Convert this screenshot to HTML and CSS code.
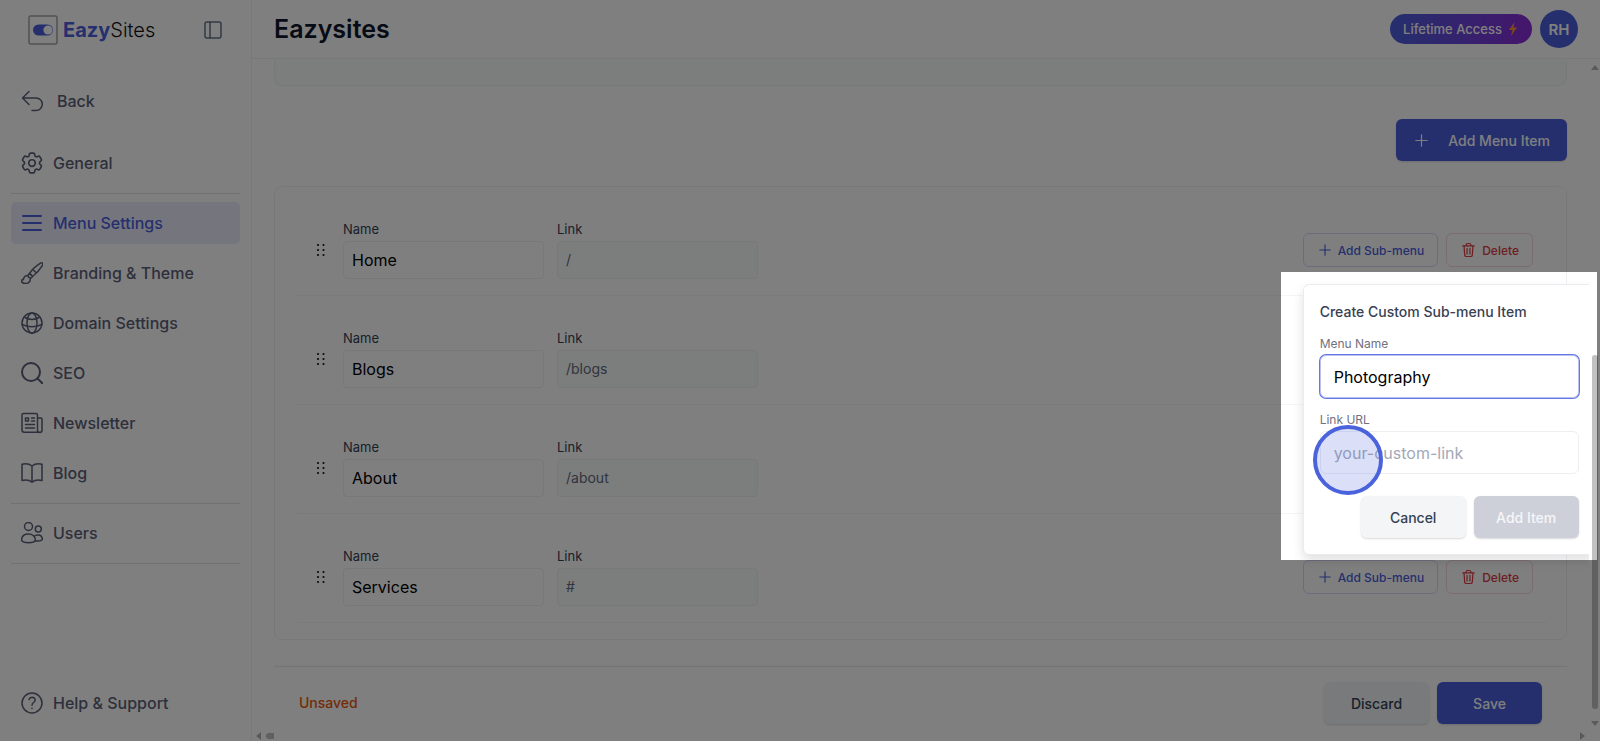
FILE: index.html
```html
<!DOCTYPE html>
<html lang="en">
<head>
  <meta charset="UTF-8">
  <meta name="viewport" content="width=device-width, initial-scale=1.0">
  <title>Eazysites - Menu Settings</title>
  <link rel="stylesheet" href="styles.css">
</head>
<body>
  <!-- shared icons -->
  <svg class="sprite" aria-hidden="true">
    <symbol id="i-plus" viewBox="0 0 16 16"><path d="M8 1v14M1 8h14"/></symbol>
    <symbol id="i-trash" viewBox="0 0 16 18"><path d="M1 4h14M5 4V3q0-2 2-2h2q2 0 2 2v1M2.500 4l.8 11q.1 2 2 2h5.400q1.900 0 2-2l.8-11M6.200 7v7M9.800 7v7"/></symbol>
    <symbol id="i-grip" viewBox="0 0 10 14"><path d="M2 2h.01M7.500 2h.01M2 7h.01M7.500 7h.01M2 12h.01M7.500 12h.01"/></symbol>
  </svg>

  <div class="app">
    <aside class="sidebar">
      <div class="brand">
        <a class="logo" href="#">
          <svg class="logo-mark" viewBox="0 0 30 30">
            <rect class="logo-frame" x="1" y="1" width="28" height="28" rx="1"/>
            <rect class="logo-pill" x="5" y="9.500" width="20" height="11" rx="5.500"/>
            <circle class="logo-knob" cx="20" cy="15" r="4.600"/>
          </svg>
          <span><b>Eazy</b>Sites</span>
        </a>
        <button class="collapse-btn" aria-label="Collapse sidebar">
          <svg class="icon" viewBox="0 0 18 18"><rect x="1" y="1" width="16" height="16" rx="2"/><path d="M6 1v16"/></svg>
        </button>
      </div>

      <nav class="nav">
        <a class="nav-item back" href="#">
          <svg class="icon" viewBox="0 0 22 22"><path d="M8 1.500L1.500 8 8 14.500M1.500 8H15a6 6 0 0 1 0 12.500h-4"/></svg>
          Back
        </a>
        <a class="nav-item" href="#">
          <svg class="icon" viewBox="2 2 20 20"><path d="M9.594 3.940c.09-.542.560-.940 1.110-.940h2.593c.55 0 1.020.398 1.110.940l.213 1.281c.063.374.313.686.645.870.074.040.147.083.220.127.325.196.720.257 1.075.124l1.217-.456a1.125 1.125 0 0 1 1.370.490l1.296 2.247a1.125 1.125 0 0 1-.260 1.431l-1.003.827c-.293.241-.438.613-.430.992a7.723 7.723 0 0 1 0 .255c-.008.378.137.750.430.991l1.004.827c.424.350.534.955.260 1.430l-1.298 2.247a1.125 1.125 0 0 1-1.369.491l-1.217-.456c-.355-.133-.750-.072-1.076.124a6.470 6.470 0 0 1-.220.128c-.331.183-.581.495-.644.869l-.213 1.281c-.09.543-.560.940-1.110.940h-2.594c-.55 0-1.019-.398-1.110-.940l-.213-1.281c-.062-.374-.312-.686-.644-.870a6.520 6.520 0 0 1-.220-.127c-.325-.196-.720-.257-1.076-.124l-1.217.456a1.125 1.125 0 0 1-1.369-.490l-1.297-2.247a1.125 1.125 0 0 1 .260-1.431l1.004-.827c.292-.240.437-.613.430-.991a6.932 6.932 0 0 1 0-.255c.007-.380-.138-.751-.430-.992l-1.004-.827a1.125 1.125 0 0 1-.260-1.430l1.297-2.247a1.125 1.125 0 0 1 1.370-.491l1.216.456c.356.133.751.072 1.076-.124.072-.044.146-.086.220-.128.332-.183.582-.495.644-.869l.214-1.280Z"/><circle cx="12" cy="12" r="3"/></svg>
          General
        </a>
        <hr>
        <a class="nav-item active" href="#">
          <svg class="icon bold" viewBox="0 0 22 22"><path d="M2 4h18M2 11h18M2 18h18"/></svg>
          Menu Settings
        </a>
        <a class="nav-item" href="#">
          <svg class="icon" viewBox="0 0 22 22"><path d="M21.500 1.200q-.7-.7-2 0Q12 6 8.500 11.500l3 3Q17 10.500 21.700 3q.5-1-.2-1.800zM12 7.700l3.300 3.300M8.500 11.500q1.800.5 3 3-.6 1.600-2 1.600-2.200-.2-2.600-2.400.1-1.500 1.600-2.200zM6.900 13.900q-3-.5-4 1.800-.3 2.800-3 2.600 1.300 3.700 5.300 3.200 4.200-.6 4.100-5.300"/></svg>
          Branding &amp; Theme
        </a>
        <a class="nav-item" href="#">
          <svg class="icon" viewBox="0 0 22 22"><circle cx="11" cy="11" r="10"/><ellipse cx="11" cy="11" rx="5" ry="10"/><path d="M3.200 5Q11 10 18.800 5M1.200 12.500q9.800 4.500 19.600 0"/></svg>
          Domain Settings
        </a>
        <a class="nav-item" href="#">
          <svg class="icon bold" viewBox="0 0 22 22"><circle cx="10" cy="10" r="9"/><path d="M16.500 16.500l5 5"/></svg>
          SEO
        </a>
        <a class="nav-item" href="#">
          <svg class="icon" viewBox="0 0 22 22"><path d="M16.500 18V3q0-1.500-1.500-1.500H2.500Q1 1.500 1 3v15q0 2.200 2.200 2.200h15.600M16.500 6H20q1 0 1 1v11.200a2.200 2.200 0 0 1-4.500 0V6M10.500 6h3M10.500 9h3M4.500 12.500h9M4.500 16h9"/><rect x="4.500" y="6" width="3" height="3"/></svg>
          Newsletter
        </a>
        <a class="nav-item" href="#">
          <svg class="icon" viewBox="0 0 22 22"><path d="M11 4Q7 .8 1 2.300v16.200Q7 17 11 20.200 15 17 21 18.500V2.300Q15 .8 11 4zM11 4v16.200"/></svg>
          Blog
        </a>
        <hr>
        <a class="nav-item" href="#">
          <svg class="icon" viewBox="0 0 22 22"><circle cx="7.500" cy="4.500" r="4"/><circle cx="17.300" cy="7" r="3"/><path d="M.5 18q.5-6 7-6 6 0 7 6-1 2.700-7 2.700t-7-2.700zM13.200 14.300q1.500-1.500 4.100-1.300 3.700.3 4.200 4.500-1.800 2.200-7.200 1.300"/></svg>
          Users
        </a>
        <hr>
        <a class="nav-item help" href="#">
          <svg class="icon" viewBox="0 0 22 22"><circle cx="11" cy="11" r="10"/><path d="M8 7.500Q8.700 5.300 11 5.300q3 .1 3.100 2.600 0 1.400-1.600 2.600-1.500 1-1.500 2.700M11 16.200v.3"/></svg>
          Help &amp; Support
        </a>
      </nav>
    </aside>

    <div class="page">
      <header class="topbar">
        <h1>Eazysites</h1>
        <button class="plan">
          Lifetime Access
          <svg viewBox="0 0 8 14"><path d="M5.500 0L0 8h3.500L2 14l6-8.500H4.500z"/></svg>
        </button>
        <button class="avatar">RH</button>
      </header>

      <div class="viewport">
        <main class="content">
          <div class="prev-panel"></div>
          <button class="btn primary add-menu">
            <svg class="icon" viewBox="0 0 16 16"><use href="#i-plus"/></svg>
            Add Menu Item
          </button>

          <section class="menu-card">
            <div class="menu-row">
              <svg class="grip" viewBox="0 0 10 14"><use href="#i-grip"/></svg>
              <div class="field"><label for="name1">Name</label><input id="name1" value="Home"></div>
              <div class="field"><label for="link1">Link</label><input id="link1" value="/" readonly></div>
              <div class="actions">
                <button class="small-btn"><svg class="icon" viewBox="0 0 16 16"><use href="#i-plus"/></svg>Add Sub-menu</button>
                <button class="small-btn danger"><svg class="icon trash" viewBox="0 0 16 18"><use href="#i-trash"/></svg>Delete</button>
                <form class="popover">
                  <h2>Create Custom Sub-menu Item</h2>
                  <label for="subName">Menu Name</label>
                  <input id="subName" class="focused" value="Photography">
                  <label for="subLink">Link URL</label>
                  <input id="subLink" placeholder="your-custom-link">
                  <div class="popover-actions">
                    <button class="btn light" type="button">Cancel</button>
                    <button class="btn muted" type="button" disabled>Add Item</button>
                  </div>
                </form>
              </div>
            </div>
            <div class="menu-row">
              <svg class="grip" viewBox="0 0 10 14"><use href="#i-grip"/></svg>
              <div class="field"><label for="name2">Name</label><input id="name2" value="Blogs"></div>
              <div class="field"><label for="link2">Link</label><input id="link2" value="/blogs" readonly></div>
            </div>
            <div class="menu-row">
              <svg class="grip" viewBox="0 0 10 14"><use href="#i-grip"/></svg>
              <div class="field"><label for="name3">Name</label><input id="name3" value="About"></div>
              <div class="field"><label for="link3">Link</label><input id="link3" value="/about" readonly></div>
            </div>
            <div class="menu-row">
              <svg class="grip" viewBox="0 0 10 14"><use href="#i-grip"/></svg>
              <div class="field"><label for="name4">Name</label><input id="name4" value="Services"></div>
              <div class="field"><label for="link4">Link</label><input id="link4" value="#" readonly></div>
              <div class="actions">
                <button class="small-btn"><svg class="icon" viewBox="0 0 16 16"><use href="#i-plus"/></svg>Add Sub-menu</button>
                <button class="small-btn danger"><svg class="icon trash" viewBox="0 0 16 18"><use href="#i-trash"/></svg>Delete</button>
              </div>
            </div>
          </section>

          <footer class="savebar">
            <span class="unsaved">Unsaved</span>
            <button class="btn light">Discard</button>
            <button class="btn primary">Save</button>
          </footer>
          <div class="hscroll">
            <i class="arrow left"></i><i class="hthumb"></i><i class="arrow right"></i>
          </div>
        </main>
        <div class="vscroll">
          <i class="arrow up"></i><i class="vthumb"></i><i class="arrow down"></i>
        </div>
      </div>
    </div>
  </div>

  <!-- tour step: dims the page around the popover -->
  <div class="spotlight"></div>
  <div class="pointer"></div>
</body>
</html>
```
FILE: styles.css
```css
* {
  box-sizing: border-box;
}

body {
  margin: 0;
  overflow: hidden;
  background: #fff;
  color: #334155;
  font-family: Inter, "Liberation Sans", sans-serif;
  font-size: 16px;
}

button,
input {
  font: inherit;
  color: inherit;
}

button {
  border: none;
  background: none;
  padding: 0;
  cursor: pointer;
}

.sprite {
  display: none;
}

.icon {
  flex: none;
  fill: none;
  stroke: currentColor;
  stroke-width: 1.5;
  stroke-linecap: round;
  stroke-linejoin: round;
}

.app {
  display: flex;
  height: 100vh;
}

/* sidebar */
.sidebar {
  flex: none;
  width: 252px;
  padding: 0 11px;
  display: flex;
  flex-direction: column;
  border-right: 1px solid #f3f3f6;
}

.brand {
  height: 60px;
  flex: none;
  padding: 0 18px 0 17px;
  display: flex;
  align-items: center;
  justify-content: space-between;
}

.logo {
  display: flex;
  align-items: center;
  gap: 5px;
  font-size: 20px;
  font-weight: 300;
  color: #111;
  text-decoration: none;
}
.logo b {
  font-weight: 700;
  color: #4a5fdc;
}
.logo-mark {
  width: 30px;
  height: 30px;
}
.logo-frame {
  fill: none;
  stroke: #777;
}
.logo-pill {
  fill: #4a5fdc;
}
.logo-knob {
  fill: #fff;
}

.collapse-btn {
  color: #64748b;
}
.collapse-btn .icon {
  display: block;
  width: 18px;
  height: 18px;
}

.nav {
  flex: 1;
  display: flex;
  flex-direction: column;
  gap: 8px;
  padding: 20px 0 17px;
}
.nav hr {
  width: 100%;
  margin: 1px 0 0;
  border: none;
  border-top: 1px solid #e0e1ea;
}

.nav-item {
  flex: none;
  height: 42px;
  padding: 0 10px;
  display: flex;
  align-items: center;
  gap: 10px;
  border-radius: 5px;
  font-weight: 500;
  color: #5b6078;
  text-decoration: none;
}
.nav-item .icon {
  width: 22px;
  height: 22px;
}
.nav-item .bold {
  stroke-width: 2;
}
.nav-item.back {
  gap: 14px;
  margin-bottom: 12px;
}
.nav-item.active {
  background: #eaecfb;
  color: #4a5fdc;
}
.nav-item.help {
  margin-top: auto;
}

/* header */
.page {
  flex: 1;
  min-width: 0;
  display: flex;
  flex-direction: column;
}

.topbar {
  flex: none;
  height: 59px;
  padding: 0 22px;
  display: flex;
  align-items: center;
  gap: 8px;
  border-bottom: 1px solid #f1f1f4;
}
.topbar h1 {
  flex: 1;
  margin: 0;
  font-size: 25px;
  font-weight: 600;
  color: #0f172a;
}

.plan {
  height: 30px;
  padding: 0 15px 0 13px;
  display: flex;
  align-items: center;
  gap: 7px;
  border-radius: 15px;
  background: linear-gradient(90deg, #4a5fdc, #8a2bd9);
  color: #fff;
  font-size: 13px;
  font-weight: 500;
}
.plan svg {
  width: 8px;
  height: 14px;
  fill: #f9923c;
}

.avatar {
  width: 38px;
  height: 38px;
  border-radius: 50%;
  background: #4a5fdc;
  color: #fff;
  font-size: 15px;
  font-weight: 600;
}

/* content */
.viewport {
  flex: 1;
  min-height: 0;
  display: flex;
}

.content {
  flex: 1;
  min-width: 0;
  position: relative;
  overflow: hidden;
  padding: 0 22px;
  display: flex;
  flex-direction: column;
}

.prev-panel {
  flex: none;
  height: 27px;
  border: 1px solid #eef1f3;
  border-top: none;
  border-radius: 0 0 8px 8px;
  background: #f8fcfb;
}

.btn {
  height: 42px;
  min-width: 105px;
  display: flex;
  align-items: center;
  justify-content: center;
  border-radius: 6px;
  font-size: 14px;
  font-weight: 500;
  box-shadow: 0 1px 2px rgba(0,0,0,0.15);
}
.btn.primary {
  background: #4a5fdc;
  color: #fff;
}
.btn.light {
  background: #f3f5f7;
  color: #334155;
}
.btn.muted {
  background: #cdd0d8;
  color: #f5f6f8;
}

.add-menu {
  align-self: flex-end;
  margin: 33px 0 25px;
  padding: 0 17px 0 19px;
  gap: 20px;
}
.add-menu .icon {
  width: 13px;
  height: 13px;
}

.menu-card {
  flex: none;
  padding: 0 16px 16px;
  border: 1px solid #f0f1f4;
  border-radius: 8px;
}

.menu-row {
  height: 109px;
  padding: 18px 17px 0 25px;
  display: flex;
  align-items: center;
  border-bottom: 1px solid #f4f5f7;
  border-radius: 8px;
}

.grip {
  width: 10px;
  height: 14px;
  margin-right: 17px;
  fill: none;
  stroke: #111827;
  stroke-width: 2.2;
  stroke-linecap: round;
}

.field {
  width: 201px;
  margin-right: 13px;
  padding-bottom: 1px;
}
.field label {
  display: block;
  font-size: 13px;
  line-height: 16px;
  margin-bottom: 4px;
}
.field input {
  display: block;
  width: 100%;
  height: 38px;
  padding: 0 8px;
  border: 1px solid #eef0f3;
  border-radius: 4px;
  background: #fff;
  color: #000;
  outline: none;
}
.field input[readonly] {
  background: #f8fcfb;
  color: #64687c;
  font-size: 14px;
}

.actions {
  position: relative;
  margin-left: auto;
  display: flex;
  gap: 8px;
}
.small-btn {
  height: 34px;
  padding: 0 13px 0 15px;
  display: flex;
  align-items: center;
  gap: 7px;
  border: 1px solid #d5d9f8;
  border-radius: 6px;
  color: #4a5fdc;
  font-size: 12px;
  font-weight: 500;
}
.small-btn .icon {
  width: 12px;
  height: 12px;
}
.small-btn .trash {
  width: 13px;
  height: 16px;
}
.small-btn.danger {
  border-color: #f8d8da;
  color: #dc3d43;
}

.popover {
  position: absolute;
  left: 0;
  top: 51px;
  width: 293px;
  padding: 16px;
  border: 1px solid #e9ebef;
  border-radius: 6px;
  background: #fff;
  box-shadow: 0 6px 12px rgba(0,0,0,0.12);
  z-index: 2;
}
.popover h2 {
  margin: 0 0 12px;
  font-size: 14px;
  line-height: 22px;
  font-weight: 500;
  color: #374151;
}
.popover label {
  display: block;
  font-size: 12px;
  line-height: 18px;
  margin-bottom: 2px;
  color: #71717f;
}
.popover input {
  display: block;
  width: 100%;
  height: 43px;
  margin-bottom: 13px;
  padding: 0 13px;
  border: 1px solid #eceef1;
  border-radius: 6px;
  color: #000;
  outline: none;
}
.popover input.focused {
  border-color: #b9c1f3;
  box-shadow: 0 0 0 1px #6577e4;
}
.popover input::placeholder {
  color: #a3a8b8;
}
.popover-actions {
  display: flex;
  justify-content: flex-end;
  gap: 8px;
  padding-top: 9px;
}

.savebar {
  position: relative;
  z-index: 1;
  flex: 1;
  margin-top: 26px;
  padding: 15px 25px 0;
  display: flex;
  align-items: flex-start;
  gap: 8px;
  border-top: 1px solid #e8eaed;
  background: #fff;
  box-shadow: 0 -1px 4px rgba(0,0,0,0.03);
}
.unsaved {
  flex: 1;
  line-height: 42px;
  font-size: 14px;
  font-weight: 500;
  color: #ea580c;
}

/* scrollbars */
.hscroll {
  position: absolute;
  left: 4px;
  right: 4px;
  bottom: 0;
  height: 11px;
  display: flex;
  align-items: center;
  gap: 5px;
}
.hthumb {
  width: 40px;
  height: 6px;
  border-radius: 3px;
  background: #c1c1c1;
}
.vscroll {
  flex: none;
  width: 11px;
  padding: 6px 0 15px;
  display: flex;
  flex-direction: column;
  align-items: center;
}
.vthumb {
  flex: 1;
  width: 6px;
  margin: 285px 0 12px;
  border-radius: 3px;
  background: #c1c1c1;
}
.arrow {
  width: 0;
  height: 0;
  border: 4px solid transparent;
}
.arrow.up {
  border-top: none;
  border-bottom: 5px solid #b4b4b4;
}
.arrow.down {
  border-bottom: none;
  border-top: 5px solid #b4b4b4;
}
.arrow.left {
  border-left: none;
  border-right: 5px solid #b4b4b4;
}
.arrow.right {
  margin-left: auto;
  border-right: none;
  border-left: 5px solid #b4b4b4;
}

/* tour overlay */
.spotlight {
  position: fixed;
  top: 272px;
  right: 3px;
  width: 316px;
  height: 288px;
  box-shadow: 0 0 0 9999px rgba(0,0,0,0.5);
  pointer-events: none;
  z-index: 10;
}
.pointer {
  position: fixed;
  top: 425px;
  right: 217px;
  width: 70px;
  height: 70px;
  border: 4px solid #4a62dc;
  border-radius: 50%;
  background: rgba(74,98,220,0.2);
  pointer-events: none;
  z-index: 11;
}
```
